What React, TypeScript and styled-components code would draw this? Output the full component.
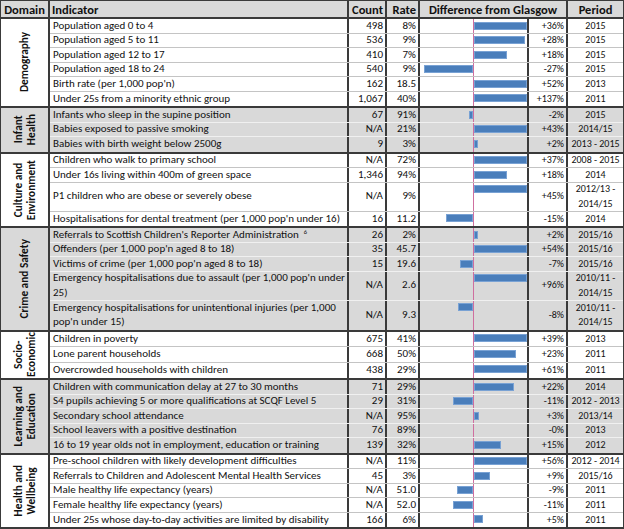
import React from 'react';
import styled, { createGlobalStyle } from 'styled-components';

const GlobalStyle = createGlobalStyle`
  html, body { margin: 0; padding: 0; background: #ffffff; }
  body { font-family: Carlito, Calibri, "Open Sans", sans-serif; color: #111111; }
`;

const DARK = '#3a3a3a';
const SHADE = '#d9d9d9';
const PX_PER_PCT = 1.83;
const HALF = 53;

type Row = {
  label: React.ReactNode;
  count: string;
  rate: string;
  diff: number;
  diffText: string;
  period: React.ReactNode;
  tall?: boolean;
};

type Group = {
  name: React.ReactNode;
  shaded: boolean;
  rowH: number;
  rows: Row[];
};

const SupText = styled.sup`
  font-size: 6.5px;
  vertical-align: top;
  position: relative;
  top: -3px;
  margin-left: 5px;
`;

const groups: Group[] = [
  {
    name: 'Demography',
    shaded: false,
    rowH: 14.5,
    rows: [
      { label: 'Population aged 0 to 4', count: '498', rate: '8%', diff: 36, diffText: '+36%', period: '2015' },
      { label: 'Population aged 5 to 11', count: '536', rate: '9%', diff: 28, diffText: '+28%', period: '2015' },
      { label: 'Population aged 12 to 17', count: '410', rate: '7%', diff: 18, diffText: '+18%', period: '2015' },
      { label: 'Population aged 18 to 24', count: '540', rate: '9%', diff: -27, diffText: '-27%', period: '2015' },
      { label: "Birth rate (per 1,000 pop'n)", count: '162', rate: '18.5', diff: 52, diffText: '+52%', period: '2013' },
      { label: 'Under 25s from a minority ethnic group', count: '1,067', rate: '40%', diff: 137, diffText: '+137%', period: '2011' },
    ],
  },
  {
    name: (<>Infant<br />Health</>),
    shaded: true,
    rowH: 14.5,
    rows: [
      { label: 'Infants who sleep in the supine position', count: '67', rate: '91%', diff: -2, diffText: '-2%', period: '2015' },
      { label: 'Babies exposed to passive smoking', count: 'N/A', rate: '21%', diff: 43, diffText: '+43%', period: '2014/15' },
      { label: 'Babies with birth weight below 2500g', count: '9', rate: '3%', diff: 2, diffText: '+2%', period: '2013 - 2015' },
    ],
  },
  {
    name: (<>Culture and<br />Environment</>),
    shaded: false,
    rowH: 14.5,
    rows: [
      { label: 'Children who walk to primary school', count: 'N/A', rate: '72%', diff: 37, diffText: '+37%', period: '2008 - 2015' },
      { label: 'Under 16s living within 400m of green space', count: '1,346', rate: '94%', diff: 18, diffText: '+18%', period: '2014' },
      { label: 'P1 children who are obese or severely obese', count: 'N/A', rate: '9%', diff: 45, diffText: '+45%', period: (<>2012/13 -<br />2014/15</>), tall: true },
      { label: "Hospitalisations for dental treatment (per 1,000 pop'n under 16)", count: '16', rate: '11.2', diff: -15, diffText: '-15%', period: '2014' },
    ],
  },
  {
    name: 'Crime and Safety',
    shaded: true,
    rowH: 14.5,
    rows: [
      { label: (<>Referrals to Scottish Children's Reporter Administration<SupText>6</SupText></>), count: '26', rate: '2%', diff: 2, diffText: '+2%', period: '2015/16' },
      { label: "Offenders (per 1,000 pop'n aged 8 to 18)", count: '35', rate: '45.7', diff: 54, diffText: '+54%', period: '2015/16' },
      { label: "Victims of crime (per 1,000 pop'n aged 8 to 18)", count: '15', rate: '19.6', diff: -7, diffText: '-7%', period: '2015/16' },
      { label: (<>Emergency hospitalisations due to assault (per 1,000 pop'n under<br />25)</>), count: 'N/A', rate: '2.6', diff: 96, diffText: '+96%', period: (<>2010/11 -<br />2014/15</>), tall: true },
      { label: (<>Emergency hospitalisations for unintentional injuries (per 1,000<br />pop'n under 15)</>), count: 'N/A', rate: '9.3', diff: -8, diffText: '-8%', period: (<>2010/11 -<br />2014/15</>), tall: true },
    ],
  },
  {
    name: (<>Socio-<br />Economic</>),
    shaded: false,
    rowH: 15.5,
    rows: [
      { label: 'Children in poverty', count: '675', rate: '41%', diff: 39, diffText: '+39%', period: '2013' },
      { label: 'Lone parent households', count: '668', rate: '50%', diff: 23, diffText: '+23%', period: '2011' },
      { label: 'Overcrowded households with children', count: '438', rate: '29%', diff: 61, diffText: '+61%', period: '2011' },
    ],
  },
  {
    name: (<>Learning and<br />Education</>),
    shaded: true,
    rowH: 14.5,
    rows: [
      { label: 'Children with communication delay at 27 to 30 months', count: '71', rate: '29%', diff: 22, diffText: '+22%', period: '2014' },
      { label: 'S4 pupils achieving 5 or more qualifications at SCQF Level 5', count: '29', rate: '31%', diff: -11, diffText: '-11%', period: '2012 - 2013' },
      { label: 'Secondary school attendance', count: 'N/A', rate: '95%', diff: 3, diffText: '+3%', period: '2013/14' },
      { label: 'School leavers with a positive destination', count: '76', rate: '89%', diff: 0, diffText: '-0%', period: '2013' },
      { label: '16 to 19 year olds not in employment, education or training', count: '139', rate: '32%', diff: 15, diffText: '+15%', period: '2012' },
    ],
  },
  {
    name: (<>Health and<br />Wellbeing</>),
    shaded: false,
    rowH: 14.5,
    rows: [
      { label: 'Pre-school children with likely development difficulties', count: 'N/A', rate: '11%', diff: 56, diffText: '+56%', period: '2012 - 2014' },
      { label: 'Referrals to Children and Adolescent Mental Health Services', count: '45', rate: '3%', diff: 9, diffText: '+9%', period: '2015/16' },
      { label: 'Male healthy life expectancy (years)', count: 'N/A', rate: '51.0', diff: -9, diffText: '-9%', period: '2011' },
      { label: 'Female healthy life expectancy (years)', count: 'N/A', rate: '52.0', diff: -11, diffText: '-11%', period: '2011' },
      { label: 'Under 25s whose day-to-day activities are limited by disability', count: '166', rate: '6%', diff: 5, diffText: '+5%', period: '2011' },
    ],
  },
];

const Table = styled.div`
  width: 624px;
  box-sizing: border-box;
  border-top: 1px solid ${DARK};
  border-left: 1px solid ${DARK};
  border-right: 1px solid ${DARK};
  border-bottom: 2px solid ${DARK};
  font-size: 11px;
`;

const HeaderRow = styled.div`
  display: grid;
  grid-template-columns: 49px 299px 38px 33px 148px 55px;
  height: 18px;
  box-sizing: border-box;
  background: ${SHADE};
  border-bottom: 2px solid ${DARK};
`;

const HeadCell = styled.div<{ $align?: 'left' | 'center' | 'right'; $last?: boolean }>`
  box-sizing: border-box;
  display: flex;
  align-items: center;
  justify-content: ${(p) => (p.$align === 'left' ? 'flex-start' : p.$align === 'right' ? 'flex-end' : 'center')};
  padding: 0 2px 0 2px;
  font-weight: 700;
  font-size: 12.5px;
  border-right: ${(p) => (p.$last ? 'none' : `2px solid ${DARK}`)};
  white-space: nowrap;
`;

const GroupBlock = styled.div<{ $shaded: boolean }>`
  display: flex;
  background: ${(p) => (p.$shaded ? SHADE : '#ffffff')};
  & + & {
    border-top: 2px solid ${DARK};
  }
`;

const DomainCell = styled.div`
  width: 49px;
  flex: none;
  box-sizing: border-box;
  border-right: 2px solid ${DARK};
  display: flex;
  align-items: center;
  justify-content: center;
`;

const DomainLabel = styled.div`
  writing-mode: vertical-rl;
  transform: rotate(180deg);
  font-weight: 700;
  font-size: 11.3px;
  line-height: 13px;
  text-align: center;
  white-space: nowrap;
`;

const Rows = styled.div`
  flex: 1;
  display: flex;
  flex-direction: column;
`;

const DataRow = styled.div<{ $h: number; $line: string }>`
  display: grid;
  grid-template-columns: 299px 38px 33px 109px 39px 55px;
  height: ${(p) => p.$h}px;
  box-sizing: border-box;
  &:not(:last-child) {
    border-bottom: 1px solid ${(p) => p.$line};
  }
`;

const Cell = styled.div<{ $align: 'left' | 'center' | 'right'; $last?: boolean; $small?: boolean }>`
  box-sizing: border-box;
  display: flex;
  align-items: center;
  justify-content: ${(p) => (p.$align === 'left' ? 'flex-start' : p.$align === 'right' ? 'flex-end' : 'center')};
  text-align: ${(p) => p.$align};
  padding: ${(p) => (p.$align === 'left' ? '0 2px 0 3px' : '0 2px')};
  border-right: ${(p) => (p.$last ? 'none' : `2px solid ${DARK}`)};
  font-size: ${(p) => (p.$small ? '10px' : '11px')};
  white-space: nowrap;
  line-height: 14.5px;
  overflow: hidden;
`;

const ChartCell = styled.div`
  box-sizing: border-box;
  display: flex;
  border-right: 2px solid ${DARK};
`;

const Half = styled.div<{ $side: 'neg' | 'pos' }>`
  width: ${HALF}px;
  flex: none;
  box-sizing: content-box;
  display: flex;
  align-items: flex-start;
  justify-content: ${(p) => (p.$side === 'neg' ? 'flex-end' : 'flex-start')};
  padding-top: 2.5px;
  overflow: hidden;
  border-right: ${(p) => (p.$side === 'neg' ? '1px solid #cf6f9f' : 'none')};
`;

const Bar = styled.div`
  height: 8px;
  flex: none;
  box-sizing: border-box;
  background: #4a7ebb;
  border: 1px solid #79a2d4;
`;

function BarChart({ diff }: { diff: number }) {
  const w = Math.min(Math.abs(diff) * PX_PER_PCT, HALF);
  return (
    <ChartCell>
      <Half $side="neg">{diff < 0 && <Bar style={{ width: `${w}px` }} />}</Half>
      <Half $side="pos">{diff > 0 && <Bar style={{ width: `${w}px` }} />}</Half>
    </ChartCell>
  );
}

export default function App() {
  return (
    <>
      <GlobalStyle />
      <Table>
        <HeaderRow>
          <HeadCell>Domain</HeadCell>
          <HeadCell $align="left">Indicator</HeadCell>
          <HeadCell $align="right">Count</HeadCell>
          <HeadCell $align="right">Rate</HeadCell>
          <HeadCell>Difference from Glasgow</HeadCell>
          <HeadCell $last>Period</HeadCell>
        </HeaderRow>
        {groups.map((g, gi) => (
          <GroupBlock key={gi} $shaded={g.shaded}>
            <DomainCell>
              <DomainLabel>{g.name}</DomainLabel>
            </DomainCell>
            <Rows>
              {g.rows.map((r, ri) => (
                <DataRow key={ri} $h={r.tall ? g.rowH * 2 : g.rowH} $line={g.shaded ? '#f0f0f0' : '#c4c4c4'}>
                  <Cell $align="left">{r.label}</Cell>
                  <Cell $align="right">{r.count}</Cell>
                  <Cell $align="right">{r.rate}</Cell>
                  <BarChart diff={r.diff} />
                  <Cell $align="right" $small>{r.diffText}</Cell>
                  <Cell $align="center" $last $small>{r.period}</Cell>
                </DataRow>
              ))}
            </Rows>
          </GroupBlock>
        ))}
      </Table>
    </>
  );
}
